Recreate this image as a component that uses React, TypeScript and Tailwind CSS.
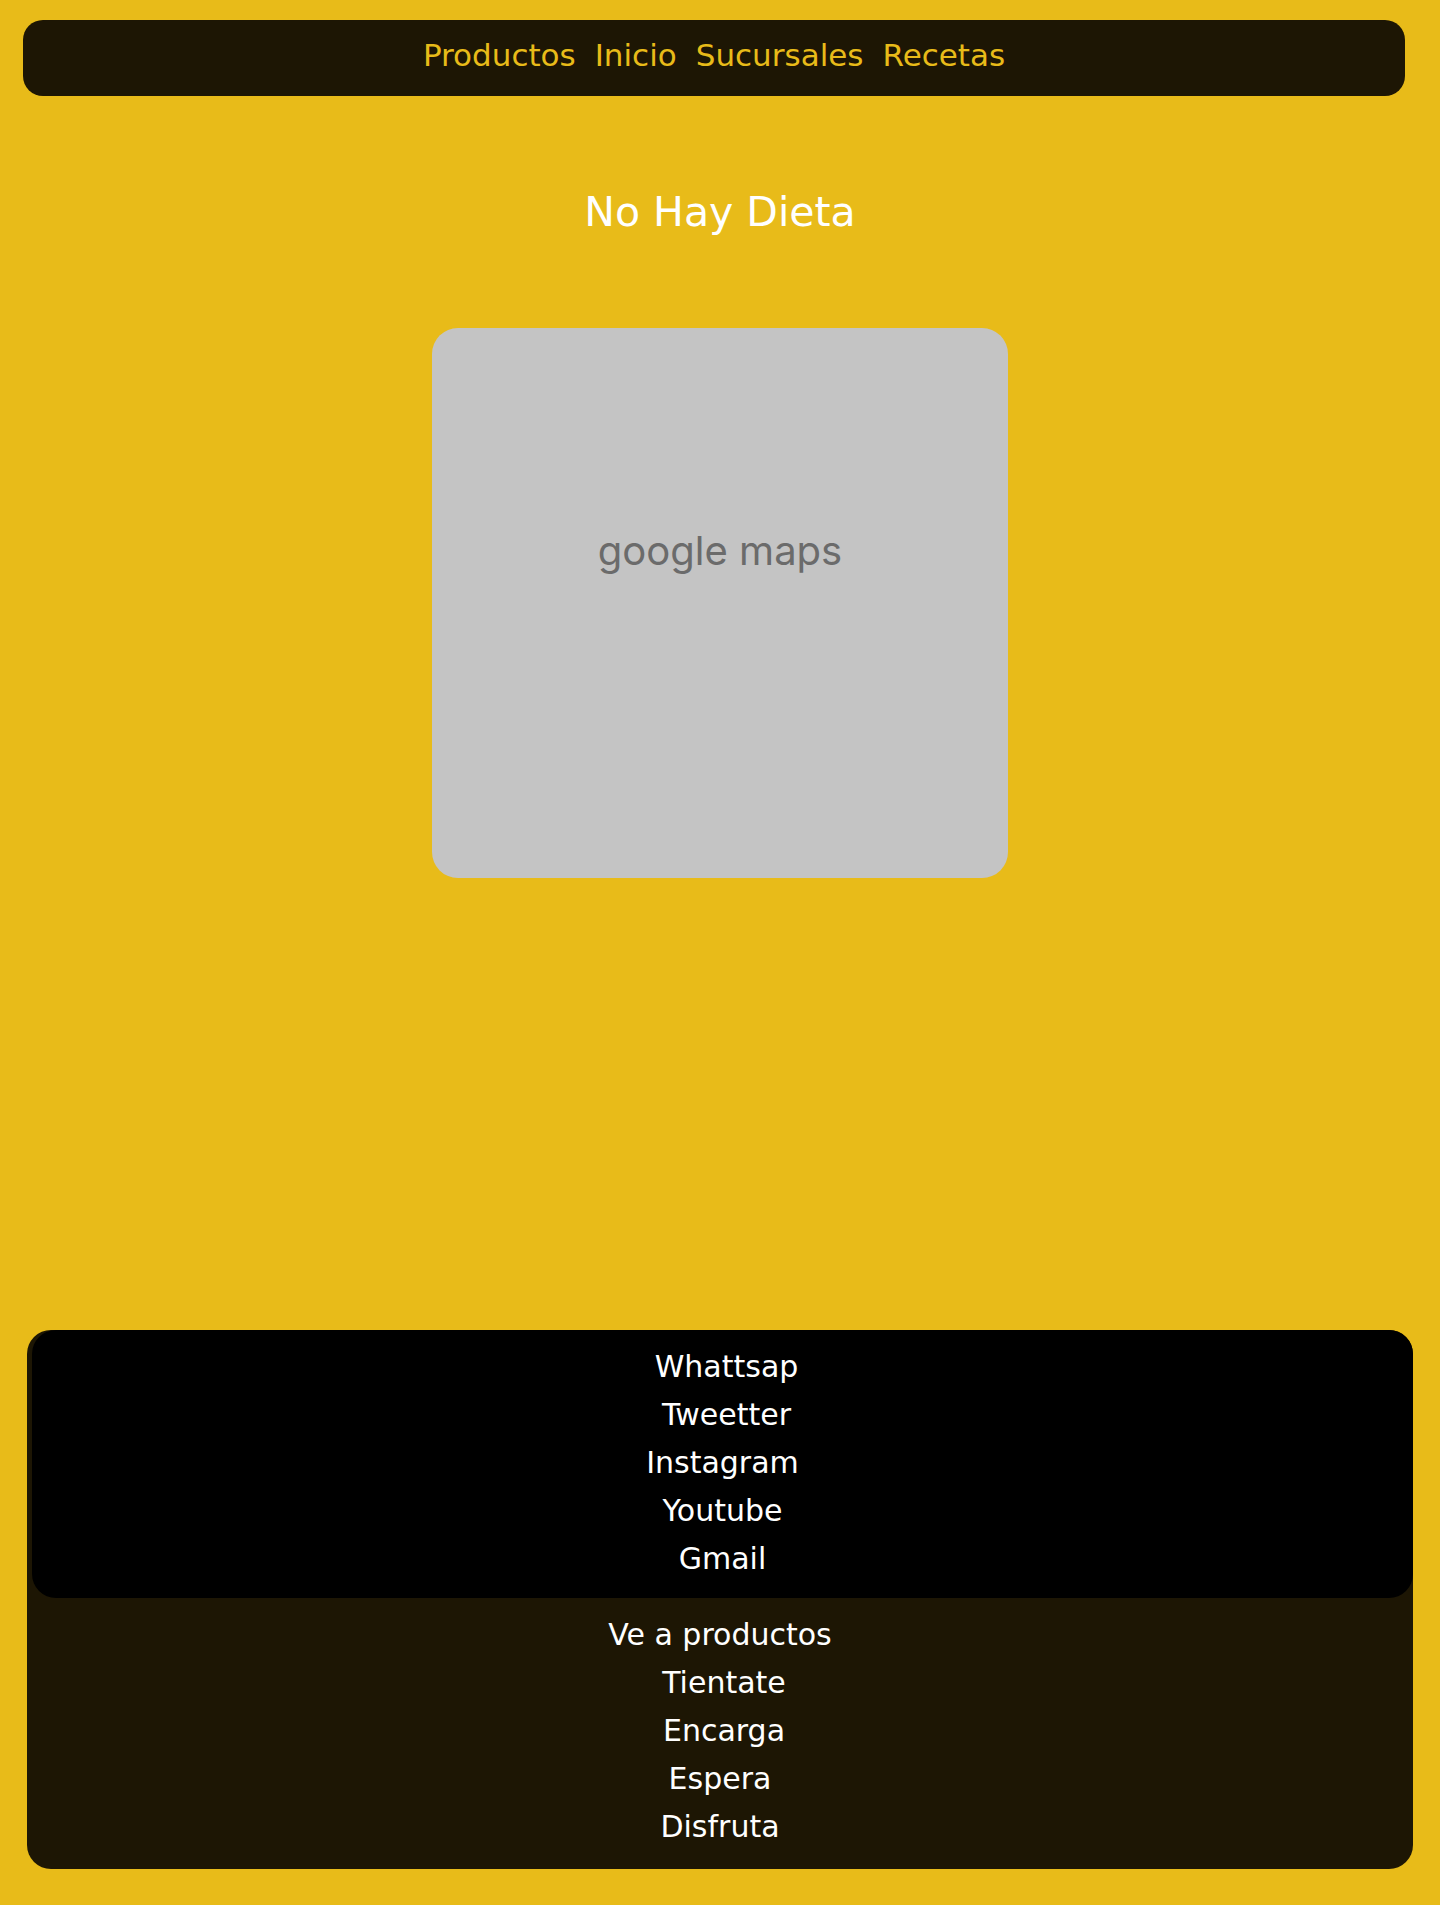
import React from "react";

const font = { fontFamily: '"DejaVu Sans", "Noto Sans", sans-serif' };

export default function App() {
  const social = [
    { t: "Whattsap", s: true },
    { t: "Tweetter", s: true },
    { t: "Instagram", s: false },
    { t: "Youtube", s: false },
    { t: "Gmail", s: false },
  ];
  const steps = [
    { t: "Ve a productos", s: false },
    { t: "Tientate", s: true },
    { t: "Encarga", s: true },
    { t: "Espera", s: false },
    { t: "Disfruta", s: false },
  ];
  return (
    <div className="min-h-[1905px] w-full bg-[#e8bb19] pt-[20px] pb-[36px]" style={font}>
      <nav className="ml-[23px] mr-[35px] h-[76px] rounded-[20px] bg-[#1d1604] flex justify-center items-start pt-[17px] gap-[19px] text-[31px] leading-[36px] text-[#e8bb19]">
        <a>Productos</a>
        <a>Inicio</a>
        <a>Sucursales</a>
        <a>Recetas</a>
      </nav>

      <h1 className="mt-[92px] text-center text-[41px] leading-[48px] text-white font-normal">
        No Hay Dieta
      </h1>

      <div className="mx-auto mt-[92px] w-[576px] h-[550px] rounded-[26px] bg-[#c4c4c4] flex justify-center pt-[199px]">
        <span
          className="text-[40px] leading-[48px] text-[#6b6b6b]"
          style={{ fontFamily: 'Inter, "Noto Sans", sans-serif' }}
        >
          google maps
        </span>
      </div>

      <footer className="mx-[27px] mt-[452px] rounded-[24px] bg-[#1d1604] text-white text-[30px] leading-[48px]">
        <div className="ml-[5px] rounded-[24px] bg-black pt-[13px] pb-[15px] flex flex-col items-center">
          {social.map((s) => (
            <span key={s.t} className={s.s ? "pl-[8px]" : ""}>
              {s.t}
            </span>
          ))}
        </div>
        <div className="pt-[13px] pb-[18px] flex flex-col items-center">
          {steps.map((s) => (
            <span key={s.t} className={s.s ? "pl-[8px]" : ""}>
              {s.t}
            </span>
          ))}
        </div>
      </footer>
    </div>
  );
}
